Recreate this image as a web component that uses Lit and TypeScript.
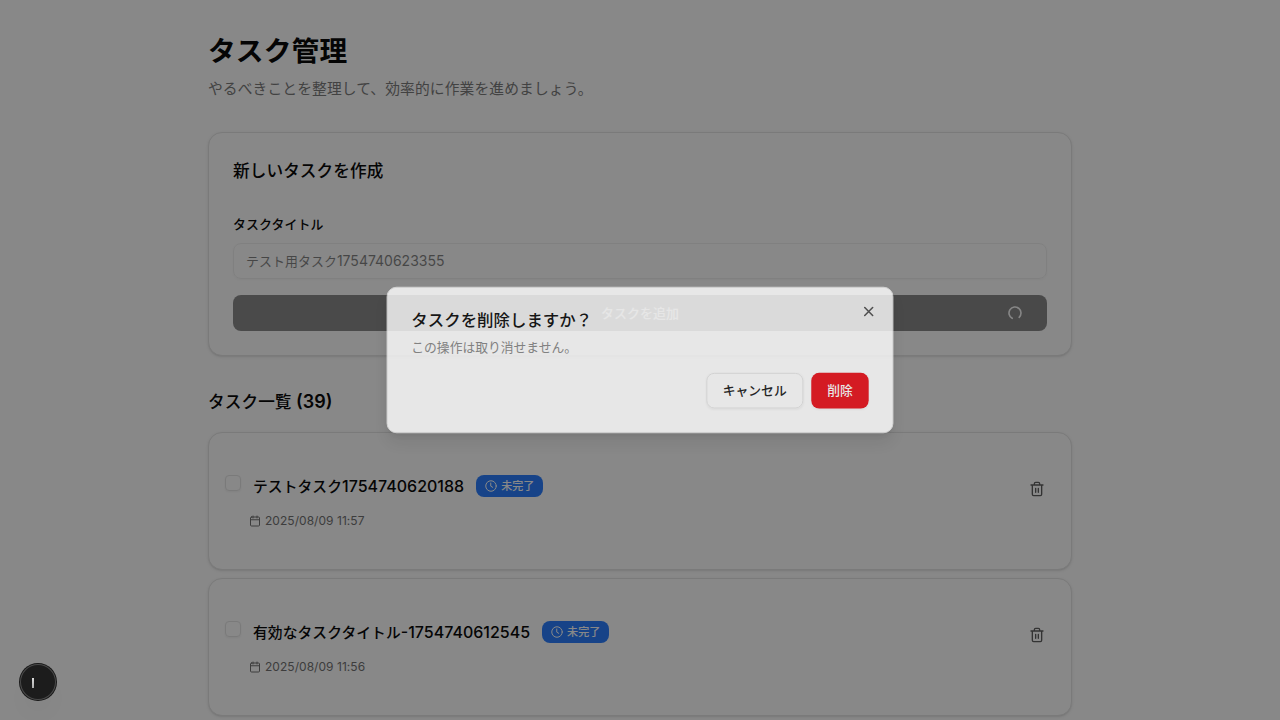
import { LitElement, html, css, svg } from "lit";
import { customElement } from "lit/decorators.js";

const tasks = [
  { jp: "テストタスク", num: "1754740620188", date: "2025/08/09 11:57" },
  { jp: "有効なタスクタイトル", num: "-1754740612545", date: "2025/08/09 11:56" },
];

const icon = (cls: string, body: unknown) => html`<svg class=${cls} viewBox="0 0 24 24" fill="none"
  stroke="currentColor" stroke-width="2" stroke-linecap="round" stroke-linejoin="round">${body}</svg>`;

const clock = svg`<circle cx="12" cy="12" r="10.5"/><path d="M11.5 6v6.3l4 2.4"/>`;
const calendar = svg`<path d="M8 2v4M16 2v4"/><rect x="3" y="4" width="18" height="18" rx="2"/><path d="M3 9.5h18"/>`;
const trash = svg`<path d="M3 6h18M19 6v14c0 1-1 2-2 2H7c-1 0-2-1-2-2V6M8 6V4c0-1 1-2 2-2h4c1 0 2 1 2 2v2M10 11v6M14 11v6"/>`;
const cross = svg`<path d="M18 6 6 18M6 6l12 12"/>`;
const loader = svg`<path d="M21 12a9 9 0 1 1-6.219-8.56"/>`;

@customElement("app-root")
export class AppRoot extends LitElement {
  static styles = css`
    :host {
      display: block;
      position: relative;
      height: 100vh;
      overflow: hidden;
      background: #fff;
      color: #0a0a0a;
      font-family: Inter, "Noto Sans CJK JP", sans-serif;
      font-size: 16px;
      line-height: 24px;
      -webkit-font-smoothing: antialiased;
    }
    * { box-sizing: border-box; margin: 0; }
    svg { display: block; flex: none; }
    .jp { font-size: 0.923em; line-height: 1; letter-spacing: 0.006em; }
    .page { width: 896px; margin: 0 auto; padding: 32px 16px; }
    h1 { font-size: 30px; line-height: 36px; font-weight: 700; height: 36px; }
    .lead { margin-top: 8px; height: 24px; color: #7c7c7c; }
    .lead .jp { letter-spacing: 0.008em; }
    .card {
      border: 1px solid #e5e5e5;
      border-radius: 14px;
      box-shadow: 0 1px 3px rgba(0,0,0,.1), 0 1px 2px -1px rgba(0,0,0,.1);
      background: #fff;
    }
    .create { margin-top: 32px; height: 224px; padding: 24px; }
    h2 { font-size: 18px; line-height: 28px; height: 28px; font-weight: 600; }
    h2 .jp { font-weight: 500; }
    .label { margin-top: 29px; height: 20px; font-size: 14px; line-height: 20px; font-weight: 500; }
    .input {
      margin-top: 9px; height: 36px; padding: 0 12px;
      display: flex; align-items: center;
      border: 1px solid #e5e5e5; border-radius: 8px;
      box-shadow: 0 1px 2px rgba(0,0,0,.05);
      font-size: 14px; line-height: 20px; opacity: .5;
    }
    .submit {
      margin-top: 16px; height: 36px; padding: 0 24px;
      display: grid; grid-template-columns: 16px 1fr 16px; align-items: center; text-align: center;
      border-radius: 8px; background: #171717; color: #fafafa; opacity: .5;
      font-size: 14px; line-height: 20px; font-weight: 500;
    }
    .label-text { grid-column: 2; }
    .spin { width: 16px; height: 16px; transform: rotate(118deg); stroke-width: 2.4; }
    .list-title { margin-top: 32px; }
    .list { margin-top: 16px; display: flex; flex-direction: column; gap: 8px; }
    .task { height: 138px; padding: 40px 16px; display: flex; align-items: flex-start; gap: 12px; }
    .check {
      width: 16px; height: 16px; margin-top: 2px; flex: none;
      border: 1px solid #e5e5e5; border-radius: 4px; box-shadow: 0 1px 2px rgba(0,0,0,.05);
    }
    .body { flex: 1; height: 56px; display: flex; flex-direction: column; justify-content: space-between; }
    .head { display: flex; align-items: center; gap: 12px; height: 26px; font-weight: 500; }
    .badge {
      display: flex; align-items: center; gap: 4px; height: 22px; padding: 0 9px;
      border-radius: 8px; background: #2b7fff; color: #fff; font-size: 12px; line-height: 16px;
    }
    .badge .jp { padding-top: 1px; letter-spacing: 0; }
    .i12 { width: 12px; height: 12px; }
    .i16 { width: 16px; height: 16px; }
    .date {
      display: flex; align-items: center; gap: 4px; height: 16px; margin-left: -4px;
      color: #737373; font-size: 12px; line-height: 16px; letter-spacing: .04px;
    }
    .del { width: 36px; height: 32px; display: grid; place-items: center; color: #606060; }
    .overlay { position: absolute; inset: 0; background: rgba(0,0,0,.467); }
    .layer { position: absolute; inset: 0; display: grid; place-items: center; }
    .dialog {
      position: relative; width: 512px; height: 148px; padding: 24px;
      border: 1px solid #e5e5e5; border-radius: 10px; background: #fff;
      box-shadow: 0 10px 15px -3px rgba(0,0,0,.1), 0 4px 6px -4px rgba(0,0,0,.1);
      opacity: .8; transform: scale(.99);
    }
    .dialog .jp { letter-spacing: 0; }
    .dialog h3 { font-size: 18px; line-height: 18px; height: 18px; font-weight: 500; }
    .desc { margin-top: 8px; height: 20px; font-size: 14px; line-height: 20px; color: #808080; }
    .actions { margin-top: 16px; display: flex; justify-content: flex-end; gap: 8px; }
    .btn {
      height: 36px; padding: 0 16px 1px; display: flex; align-items: center;
      border-radius: 8px; font-size: 14px; line-height: 20px; font-weight: 500;
      box-shadow: 0 1px 2px rgba(0,0,0,.05);
    }
    .cancel { border: 1px solid #e5e5e5; }
    .danger { background: #e7000b; color: #fff; }
    .close { position: absolute; top: 16px; right: 16px; opacity: .7; }
    .close svg { stroke-width: 2.4; }
    .dev {
      position: absolute; left: 20px; bottom: 20px; width: 36px; height: 36px; border-radius: 50%;
      display: flex; align-items: center; padding-left: 12px;
      background: #1c1c1c;
      box-shadow: 0 0 0 1px #171717, inset 0 0 0 1px #4a4a4a, 0 16px 32px -8px rgba(0,0,0,.06);
    }
    .bar { width: 2px; height: 10px; margin-top: 1px; background: linear-gradient(#ddd, #aaa); }
  `;

  render() {
    return html`
      <div class="page">
        <h1><span class="jp">タスク管理</span></h1>
        <p class="lead"><span class="jp">やるべきことを整理して、効率的に作業を進めましょう。</span></p>
        <section class="card create">
          <h2><span class="jp">新しいタスクを作成</span></h2>
          <div class="label"><span class="jp">タスクタイトル</span></div>
          <div class="input"><span><span class="jp">テスト用タスク</span>1754740623355</span></div>
          <div class="submit"><span class="label-text"><span class="jp">タスクを追加</span></span>${icon("spin", loader)}</div>
        </section>
        <h2 class="list-title"><span class="jp">タスク一覧</span> (39)</h2>
        <div class="list">
          ${tasks.map((t) => html`
            <article class="card task">
              <span class="check"></span>
              <div class="body">
                <div class="head">
                  <span><span class="jp">${t.jp}</span>${t.num}</span>
                  <span class="badge">${icon("i12", clock)}<span class="jp">未完了</span></span>
                </div>
                <div class="date">${icon("i12", calendar)}<span>${t.date}</span></div>
              </div>
              <span class="del">${icon("i16", trash)}</span>
            </article>`)}
        </div>
      </div>
      <div class="overlay"></div>
      <div class="layer">
        <div class="dialog" role="alertdialog">
          <h3><span class="jp">タスクを削除しますか？</span></h3>
          <p class="desc"><span class="jp">この操作は取り消せません。</span></p>
          <div class="actions">
            <span class="btn cancel"><span class="jp">キャンセル</span></span>
            <span class="btn danger"><span class="jp">削除</span></span>
          </div>
          <span class="close">${icon("i16", cross)}</span>
        </div>
      </div>
      <div class="dev"><span class="bar"></span></div>
    `;
  }
}
